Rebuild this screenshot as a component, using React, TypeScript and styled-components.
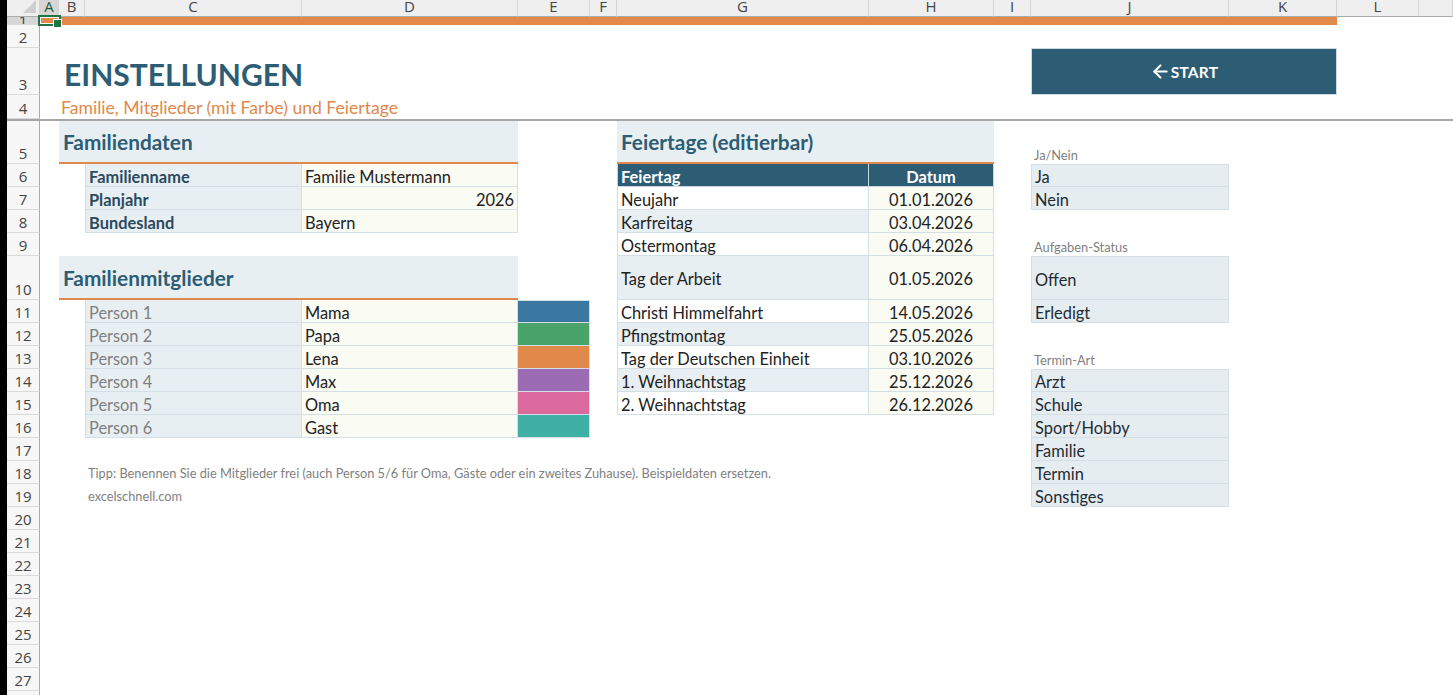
import React from "react";
import styled, { createGlobalStyle, css } from "styled-components";
import { ArrowLeft } from "lucide-react";

const COLS = ["A", "B", "C", "D", "E", "F", "G", "H", "I", "J", "K", "L", "M"];
const COL_WIDTHS = [19, 26, 217, 216, 72, 27, 252, 125, 37, 198, 108, 82];
const col = (l: string) => COLS.indexOf(l) + 2;
const row = (n: number) => (n <= 4 ? n + 1 : n + 2);

const NAVY = "#2D5D74";
const ORANGE = "#E0894A";
const LINE = "#D3DEE5";
const PALE = "#E8EFF3";
const IVORY = "#FAFBF3";
const FONT = `Lato, "Open Sans", sans-serif`;
const UI_FONT = `"Open Sans", "Noto Sans", sans-serif`;

const GlobalStyle = createGlobalStyle`
  *, *::before, *::after { box-sizing: border-box; }
  html, body { margin: 0; padding: 0; background: #fff; overflow: hidden; }
  body { font-family: ${FONT}; }
`;

type Place = { $c: string; $c2?: string; $r: number; $r2?: number };

const place = css<Place>`
  grid-column: ${(p) => col(p.$c)} / ${(p) => col(p.$c2 ?? p.$c) + 1};
  grid-row: ${(p) => row(p.$r)} / ${(p) => row(p.$r2 ?? p.$r) + 1};
`;

const Window = styled.div`
  display: flex;
  width: 1453px;
  height: 695px;
  overflow: hidden;
  background: #fff;
`;

const LeftEdge = styled.div`
  flex: none;
  width: 7px;
  background: #000;
`;

const Sheet = styled.div`
  flex: 1;
  display: grid;
  grid-template-columns: 33px ${COL_WIDTHS.map((w) => `${w}px`).join(" ")} 1fr;
  grid-template-rows: 17px 8px 23px 47px 24px 2px 43px repeat(4, 23px) 44px repeat(18, 23px);
  align-content: start;
`;

const Corner = styled.div`
  grid-column: 1;
  grid-row: 1;
  position: relative;
  background: #efefef;
  border-right: 1px solid #d4d4d4;
  border-bottom: 1px solid #ababab;
`;

const CornerMark = styled.svg`
  position: absolute;
  right: 2px;
  bottom: 2px;
`;

const ColHead = styled.div<{ $col: number; $active?: boolean }>`
  grid-column: ${(p) => p.$col};
  grid-row: 1;
  display: flex;
  align-items: flex-end;
  justify-content: center;
  overflow: hidden;
  padding-bottom: 1px;
  background: ${(p) => (p.$active ? "#d6d6d6" : "#efefef")};
  border-right: 1px solid #d4d4d4;
  border-bottom: 1px solid ${(p) => (p.$active ? "#217346" : "#ababab")};
  font-family: ${UI_FONT};
  font-size: 15px;
  line-height: 18px;
  color: ${(p) => (p.$active ? "#1e5d3a" : "#444")};
`;

const RowHead = styled.div<{ $row: number; $active?: boolean }>`
  grid-column: 1;
  grid-row: ${(p) => row(p.$row)};
  display: flex;
  align-items: ${(p) => (p.$active ? "flex-start" : "flex-end")};
  justify-content: center;
  overflow: hidden;
  padding-bottom: ${(p) => (p.$active ? "0" : "1px")};
  background: ${(p) => (p.$active ? "#d6d6d6" : "#f7f7f7")};
  border-right: 1px solid #ababab;
  border-bottom: 1px solid #dadada;
  font-family: ${UI_FONT};
  font-size: 15px;
  line-height: ${(p) => (p.$active ? "7px" : "18px")};
  color: #444;
`;

const FreezeLine = styled.div`
  grid-column: 1 / -1;
  grid-row: 6;
  background: #a6a6a6;
`;

const OrangeBar = styled.div<Place>`
  ${place}
  background: ${ORANGE};
`;

const ActiveCell = styled.div<Place>`
  ${place}
  position: relative;
  z-index: 2;
`;

const SelectionBox = styled.div`
  position: absolute;
  left: -2px;
  top: -2px;
  width: 23px;
  height: 11px;
  border: 2px solid #217346;
  box-shadow: inset 0 0 0 1px #fff;
`;

const FillHandle = styled.div`
  position: absolute;
  left: 13px;
  top: 2px;
  width: 9px;
  height: 9px;
  background: #217346;
  border: 1px solid #fff;
`;

const Title = styled.div<Place>`
  ${place}
  display: flex;
  align-items: center;
  padding: 4px 0 0 5px;
  font-size: 30px;
  font-weight: 700;
  color: ${NAVY};
  white-space: nowrap;
`;

const Subtitle = styled.div<Place>`
  ${place}
  display: flex;
  align-items: center;
  padding-left: 2px;
  font-size: 17.6px;
  color: ${ORANGE};
  white-space: nowrap;
`;

const StartButton = styled.button<Place>`
  ${place}
  display: flex;
  align-items: center;
  justify-content: center;
  margin: 0;
  padding: 0;
  background: ${NAVY};
  border: 1px solid #cfdbe2;
  color: #fff;
  font-family: ${FONT};
  font-size: 15.5px;
  font-weight: 700;
  letter-spacing: 0.2px;
  cursor: pointer;
`;

const SectionHead = styled.div<Place>`
  ${place}
  display: flex;
  align-items: center;
  padding: 0 4px;
  background: ${PALE};
  border-bottom: 2px solid ${ORANGE};
  font-size: 20.8px;
  font-weight: 700;
  color: ${NAVY};
  white-space: nowrap;
`;

type CellProps = Place & { $top?: boolean; $left?: boolean; $align?: "left" | "center" | "right" };

const Cell = styled.div<CellProps>`
  ${place}
  display: flex;
  align-items: center;
  justify-content: ${(p) =>
    p.$align === "right" ? "flex-end" : p.$align === "center" ? "center" : "flex-start"};
  padding: 2px 3px 0;
  overflow: hidden;
  white-space: nowrap;
  font-size: 16.4px;
  color: #222;
  border-right: 1px solid ${LINE};
  border-bottom: 1px solid ${LINE};
  border-top: ${(p) => (p.$top ? `1px solid ${LINE}` : "none")};
  border-left: ${(p) => (p.$left ? `1px solid ${LINE}` : "none")};
`;

const LabelCell = styled(Cell)`
  background: ${PALE};
  font-weight: 700;
  color: #2a4a5e;
`;

const ValueCell = styled(Cell)`
  background: ${IVORY};
`;

const PersonCell = styled(Cell)`
  background: ${PALE};
  color: #7f7f7f;
`;

const Swatch = styled(Cell)<{ $color: string }>`
  background: ${(p) => p.$color};
`;

const TableHeadCell = styled(Cell)`
  background: ${NAVY};
  color: #fff;
  font-weight: 700;
  border-color: #c9d6de;
`;

const HolidayCell = styled(Cell)<{ $shade?: boolean }>`
  background: ${(p) => (p.$shade ? PALE : "#fff")};
`;

const ListCell = styled(Cell)`
  background: #e6edf1;
  color: #1f2b33;
`;

const ListLabel = styled.div<Place>`
  ${place}
  display: flex;
  align-items: flex-end;
  padding: 0 3px 1px;
  font-size: 12.8px;
  color: #7f7f7f;
  white-space: nowrap;
`;

const Note = styled.div<Place>`
  ${place}
  display: flex;
  align-items: center;
  padding: 0 3px;
  font-size: 12.8px;
  color: #7f7f7f;
  white-space: nowrap;
`;

const familyData = [
  { label: "Familienname", value: "Familie Mustermann", right: false },
  { label: "Planjahr", value: "2026", right: true },
  { label: "Bundesland", value: "Bayern", right: false },
];

const members = [
  { name: "Mama", color: "#3A77A1" },
  { name: "Papa", color: "#4AA36B" },
  { name: "Lena", color: "#E0894A" },
  { name: "Max", color: "#9B6BB3" },
  { name: "Oma", color: "#DB6A9E" },
  { name: "Gast", color: "#3EB1A4" },
];

const holidays = [
  { r: 7, name: "Neujahr", date: "01.01.2026" },
  { r: 8, name: "Karfreitag", date: "03.04.2026" },
  { r: 9, name: "Ostermontag", date: "06.04.2026" },
  { r: 10, name: "Tag der Arbeit", date: "01.05.2026" },
  { r: 11, name: "Christi Himmelfahrt", date: "14.05.2026" },
  { r: 12, name: "Pfingstmontag", date: "25.05.2026" },
  { r: 13, name: "Tag der Deutschen Einheit", date: "03.10.2026" },
  { r: 14, name: "1. Weihnachtstag", date: "25.12.2026" },
  { r: 15, name: "2. Weihnachtstag", date: "26.12.2026" },
];

const lists = [
  { label: "Ja/Nein", r: 5, items: ["Ja", "Nein"] },
  { label: "Aufgaben-Status", r: 9, items: ["Offen", "Erledigt"] },
  { label: "Termin-Art", r: 13, items: ["Arzt", "Schule", "Sport/Hobby", "Familie", "Termin", "Sonstiges"] },
];

export default function App() {
  return (
    <>
      <GlobalStyle />
      <Window>
        <LeftEdge />
        <Sheet>
          <Corner>
            <CornerMark width="14" height="14" viewBox="0 0 14 14">
              <polygon points="13,0 13,13 0,13" fill="#cfcfcf" />
            </CornerMark>
          </Corner>
          {COLS.map((l) => (
            <ColHead key={l} $col={col(l)} $active={l === "A"}>
              {l === "M" ? "" : l}
            </ColHead>
          ))}
          {Array.from({ length: 28 }, (_, i) => (
            <RowHead key={i} $row={i + 1} $active={i === 0}>
              {i + 1}
            </RowHead>
          ))}
          <FreezeLine />

          <OrangeBar $c="A" $c2="K" $r={1} />
          <ActiveCell $c="A" $r={1}>
            <SelectionBox />
            <FillHandle />
          </ActiveCell>

          <Title $c="B" $c2="H" $r={3}>EINSTELLUNGEN</Title>
          <Subtitle $c="B" $c2="H" $r={4}>Familie, Mitglieder (mit Farbe) und Feiertage</Subtitle>
          <StartButton $c="J" $c2="K" $r={3}>
            <ArrowLeft size={21} strokeWidth={2.4} />
            START
          </StartButton>

          <SectionHead $c="B" $c2="D" $r={5}>Familiendaten</SectionHead>
          {familyData.map((d, i) => (
            <React.Fragment key={d.label}>
              <LabelCell $c="C" $r={6 + i} $left>{d.label}</LabelCell>
              <ValueCell $c="D" $r={6 + i} $align={d.right ? "right" : "left"}>{d.value}</ValueCell>
            </React.Fragment>
          ))}

          <SectionHead $c="B" $c2="D" $r={10}>Familienmitglieder</SectionHead>
          {members.map((m, i) => (
            <React.Fragment key={m.name}>
              <PersonCell $c="C" $r={11 + i} $left>Person {i + 1}</PersonCell>
              <ValueCell $c="D" $r={11 + i}>{m.name}</ValueCell>
              <Swatch $c="E" $r={11 + i} $top={i === 0} $color={m.color} />
            </React.Fragment>
          ))}

          <Note $c="C" $c2="J" $r={18}>
            Tipp: Benennen Sie die Mitglieder frei (auch Person 5/6 für Oma, Gäste oder ein zweites Zuhause). Beispieldaten ersetzen.
          </Note>
          <Note $c="C" $c2="D" $r={19}>excelschnell.com</Note>

          <SectionHead $c="G" $c2="H" $r={5}>Feiertage (editierbar)</SectionHead>
          <TableHeadCell $c="G" $r={6} $left>Feiertag</TableHeadCell>
          <TableHeadCell $c="H" $r={6} $align="center">Datum</TableHeadCell>
          {holidays.map((h, i) => (
            <React.Fragment key={h.name}>
              <HolidayCell $c="G" $r={h.r} $left $shade={i % 2 === 1}>{h.name}</HolidayCell>
              <ValueCell $c="H" $r={h.r} $align="center">{h.date}</ValueCell>
            </React.Fragment>
          ))}

          {lists.map((list) => (
            <React.Fragment key={list.label}>
              <ListLabel $c="J" $c2="K" $r={list.r}>{list.label}</ListLabel>
              {list.items.map((item, i) => (
                <ListCell key={item} $c="J" $r={list.r + 1 + i} $left $top={i === 0}>
                  {item}
                </ListCell>
              ))}
            </React.Fragment>
          ))}
        </Sheet>
      </Window>
    </>
  );
}
